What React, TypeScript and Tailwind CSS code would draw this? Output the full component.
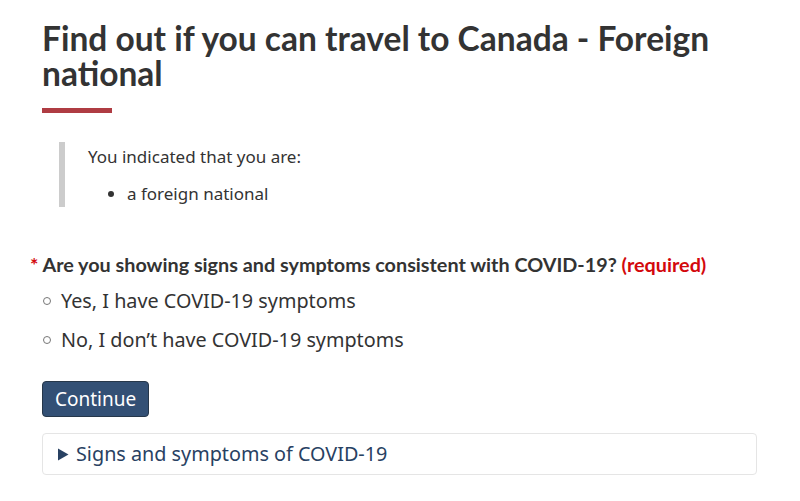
import React from "react";

const App = () => {
  return (
    <main className="min-h-[501px] bg-white pl-[42px] pr-[43px] pt-[21px] text-[#333]">
      <h1 className="text-[33.5px] font-bold leading-[35px] [font-family:Lato,sans-serif]">
        Find out if you can travel to Canada - Foreign national
      </h1>
      <div className="mt-[17px] h-[5px] w-[70px] bg-[#af3c43]" />

      <blockquote className="mt-[29px] ml-[17px] border-l-[6px] border-[#ccc] pl-[23px] pt-[4px] pb-[2px] text-[17px] [font-family:'Noto_Sans',sans-serif]">
        <p className="leading-[22px]">You indicated that you are:</p>
        <ul className="mt-[15px] list-disc pl-[39px]">
          <li className="leading-[22px]">a foreign national</li>
        </ul>
      </blockquote>

      <form className="mt-[45px]" onSubmit={(e) => e.preventDefault()}>
        <fieldset>
          <legend className="-ml-[12px] text-[19.8px] font-bold leading-[24px] [font-family:Lato,sans-serif]">
            <span className="mr-[4px] text-[#d3080c]">*</span>
            Are you showing signs and symptoms consistent with COVID-19?{" "}
            <span className="text-[#d3080c]">(required)</span>
          </legend>
          <div className="mt-[12px] flex flex-col gap-[13px] text-[19.8px] [font-family:'Noto_Sans',sans-serif]">
            <label className="flex items-center gap-[10px] leading-[26px]">
              <input
                type="radio"
                name="symptoms"
                className="ml-[1px] h-[8px] w-[8px] appearance-none rounded-full border border-[#777] checked:bg-[#333]"
              />
              Yes, I have COVID-19 symptoms
            </label>
            <label className="flex items-center gap-[10px] leading-[26px]">
              <input
                type="radio"
                name="symptoms"
                className="ml-[1px] h-[8px] w-[8px] appearance-none rounded-full border border-[#777] checked:bg-[#333]"
              />
              No, I don’t have COVID-19 symptoms
            </label>
          </div>
        </fieldset>

        <button
          type="submit"
          className="mt-[28px] rounded-[4px] border border-[#26374a] bg-[#335075] px-[12px] py-[5px] text-[19px] leading-[24px] text-white [font-family:'Noto_Sans',sans-serif]"
        >
          Continue
        </button>
      </form>

      <details className="mt-[16px] rounded-[4px] border border-[#e5e5e5] px-[14px] py-[8px] [font-family:'Noto_Sans',sans-serif]">
        <summary className="flex cursor-pointer list-none items-center gap-[7px] text-[19.8px] leading-[24px] text-[#284162] [&::-webkit-details-marker]:hidden">
          <svg width="12" height="13" viewBox="0 0 12 13" className="fill-current">
            <path d="M1 0.5 L11.5 6.5 L1 12.5 Z" />
          </svg>
          Signs and symptoms of COVID-19
        </summary>
      </details>
    </main>
  );
};

export default App;
